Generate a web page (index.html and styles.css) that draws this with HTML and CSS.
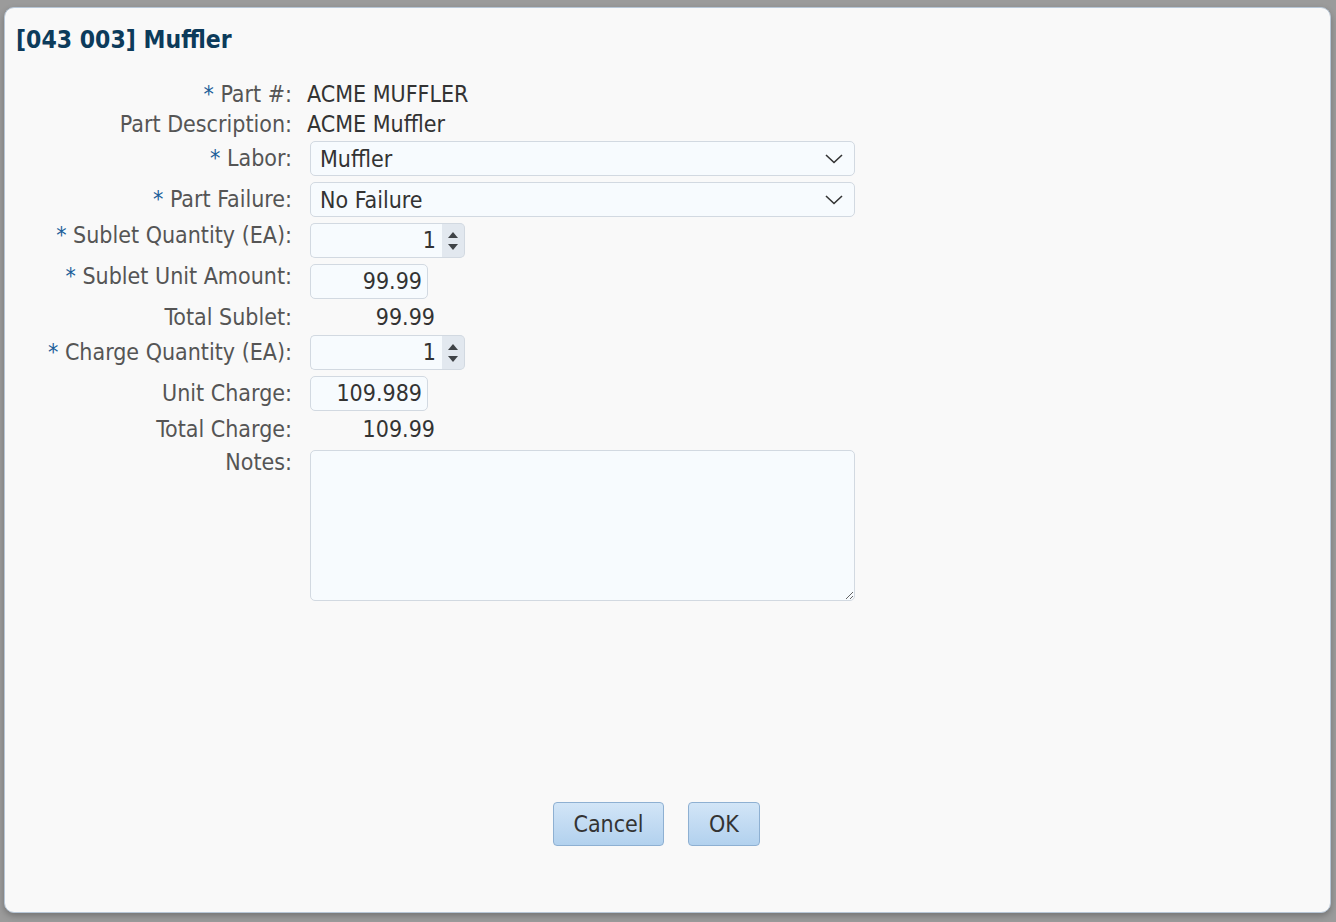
FILE: index.html
```html
<!DOCTYPE html>
<html lang="en">
<head>
    <meta charset="UTF-8">
    <meta name="viewport" content="width=device-width, initial-scale=1.0">
    <title>[043 003] Muffler</title>
    <link rel="stylesheet" href="styles.css">
</head>
<body>
    <div class="dialog">
        <h1 class="dialog-title">[043 003] Muffler</h1>

        <div class="form">
            <div class="label text-row"><span class="req">*</span> Part #:</div>
            <div class="value text-row">ACME MUFFLER</div>

            <div class="label text-row short">Part Description:</div>
            <div class="value text-row short">ACME Muffler</div>

            <div class="label ctrl-row"><span class="req">*</span> Labor:</div>
            <div class="ctrl-row">
                <div class="select">
                    <span>Muffler</span>
                    <svg width="18" height="10" viewBox="0 0 18 10"><path d="M1 1 L9 8.5 L17 1" fill="none" stroke="#333" stroke-width="1.6"/></svg>
                </div>
            </div>

            <div class="label ctrl-row"><span class="req">*</span> Part Failure:</div>
            <div class="ctrl-row">
                <div class="select">
                    <span>No Failure</span>
                    <svg width="18" height="10" viewBox="0 0 18 10"><path d="M1 1 L9 8.5 L17 1" fill="none" stroke="#333" stroke-width="1.6"/></svg>
                </div>
            </div>

            <div class="label ctrl-row up"><span class="req">*</span> Sublet Quantity (EA):</div>
            <div class="ctrl-row">
                <div class="spin">
                    <div class="spin-value">1</div>
                    <div class="spin-btns">
                        <span class="tri-up"></span>
                        <span class="tri-down"></span>
                    </div>
                </div>
            </div>

            <div class="label ctrl-row up"><span class="req">*</span> Sublet Unit Amount:</div>
            <div class="ctrl-row">
                <div class="amount">99.99</div>
            </div>

            <div class="label text-row">Total Sublet:</div>
            <div class="value text-row total">99.99</div>

            <div class="label ctrl-row"><span class="req">*</span> Charge Quantity (EA):</div>
            <div class="ctrl-row">
                <div class="spin">
                    <div class="spin-value">1</div>
                    <div class="spin-btns">
                        <span class="tri-up"></span>
                        <span class="tri-down"></span>
                    </div>
                </div>
            </div>

            <div class="label ctrl-row">Unit Charge:</div>
            <div class="ctrl-row">
                <div class="amount">109.989</div>
            </div>

            <div class="label text-row">Total Charge:</div>
            <div class="value text-row total">109.99</div>

            <div class="label notes-label">Notes:</div>
            <div class="notes-cell">
                <textarea class="notes"></textarea>
            </div>
        </div>

        <div class="footer">
            <button class="btn btn-cancel">Cancel</button>
            <button class="btn btn-ok">OK</button>
        </div>
    </div>
</body>
</html>
```

FILE: styles.css
```css
/* fondo detras del dialogo */
html, body {
    margin: 0;
    height: 100%;
}

body {
    box-sizing: border-box;
    padding: 7px 5px 9px 4px;
    background-color: #9b9b9b;
    font-family: 'DejaVu Sans Condensed', 'DejaVu Sans', sans-serif;
    font-size: 23px;
    color: #333;
}

/* dialogo */
.dialog {
    box-sizing: border-box;
    height: 100%;
    display: flex;
    flex-direction: column;
    background-color: #f9f9f9;
    border: 1px solid #b7c6d6;
    border-radius: 10px;
    box-shadow: 0 3px 6px rgba(0, 0, 0, 0.25);
}

.dialog-title {
    margin: 0;
    padding: 17px 0 0 11px;
    font-size: 24.5px;
    line-height: 30px;
    font-weight: bold;
    color: #0c3b5b;
}

/* formulario */
.form {
    display: grid;
    grid-template-columns: 287px 1fr;
    column-gap: 15px;
    margin-top: 24px;
    align-items: center;
}

.label {
    text-align: right;
    color: #555;
    white-space: nowrap;
}

.req {
    color: #1d5f99;
}

.value {
    color: #333;
}

.text-row {
    height: 30px;
    line-height: 30px;
}

.text-row.short {
    height: 29px;
}

.ctrl-row {
    height: 41px;
    display: flex;
    align-items: center;
}

.label.ctrl-row {
    display: block;
    line-height: 41px;
}

.label.up {
    line-height: 31px;
}

.total {
    width: 128px;
    text-align: right;
}

/* select */
.select {
    box-sizing: border-box;
    width: 545px;
    height: 35px;
    margin-left: 3px;
    padding: 0 11px 0 9px;
    display: flex;
    align-items: center;
    justify-content: space-between;
    background-color: #f7fbfe;
    border: 1px solid #d2d9e1;
    border-radius: 5px;
}

/* campo numerico con flechas */
.spin {
    width: 155px;
    height: 35px;
    margin-left: 3px;
    display: flex;
}

.spin-value {
    flex: 1;
    box-sizing: border-box;
    padding-right: 6px;
    text-align: right;
    line-height: 33px;
    background-color: #f7fbfe;
    border: 1px solid #d2d9e1;
    border-right: none;
    border-radius: 5px 0 0 5px;
}

.spin-btns {
    width: 22px;
    display: flex;
    flex-direction: column;
    align-items: center;
    justify-content: center;
    gap: 6px;
    background-color: #e2e8ef;
    border: 1px solid #d2d9e1;
    border-left: none;
    border-radius: 0 5px 5px 0;
}

.tri-up,
.tri-down {
    width: 0;
    height: 0;
    border-left: 5px solid transparent;
    border-right: 5px solid transparent;
}

.tri-up {
    border-bottom: 6px solid #3f4347;
}

.tri-down {
    border-top: 6px solid #3f4347;
}

.amount {
    box-sizing: border-box;
    width: 118px;
    height: 35px;
    margin-left: 3px;
    padding-right: 5px;
    text-align: right;
    line-height: 33px;
    background-color: #f7fbfe;
    border: 1px solid #d2d9e1;
    border-radius: 5px;
}

/* notas */
.notes-label {
    align-self: start;
    margin-top: 3px;
    line-height: 30px;
}

.notes-cell {
    padding-top: 6px;
}

.notes {
    display: block;
    box-sizing: border-box;
    width: 545px;
    height: 151px;
    margin-left: 3px;
    background-color: #f7fbfe;
    border: 1px solid #d2d9e1;
    border-radius: 5px;
    font-family: inherit;
    font-size: 23px;
}

/* botones */
.footer {
    margin-top: auto;
    padding: 0 22px 66px 0;
    display: flex;
    justify-content: center;
    gap: 24px;
}

.btn {
    height: 44px;
    font-family: inherit;
    font-size: 23px;
    color: #333;
    background: linear-gradient(#d2e5f7, #b2d1ee);
    border: 1px solid #8eb0d2;
    border-radius: 4px;
    padding: 0;
}

.btn-cancel {
    width: 111px;
}

.btn-ok {
    width: 72px;
}
```
